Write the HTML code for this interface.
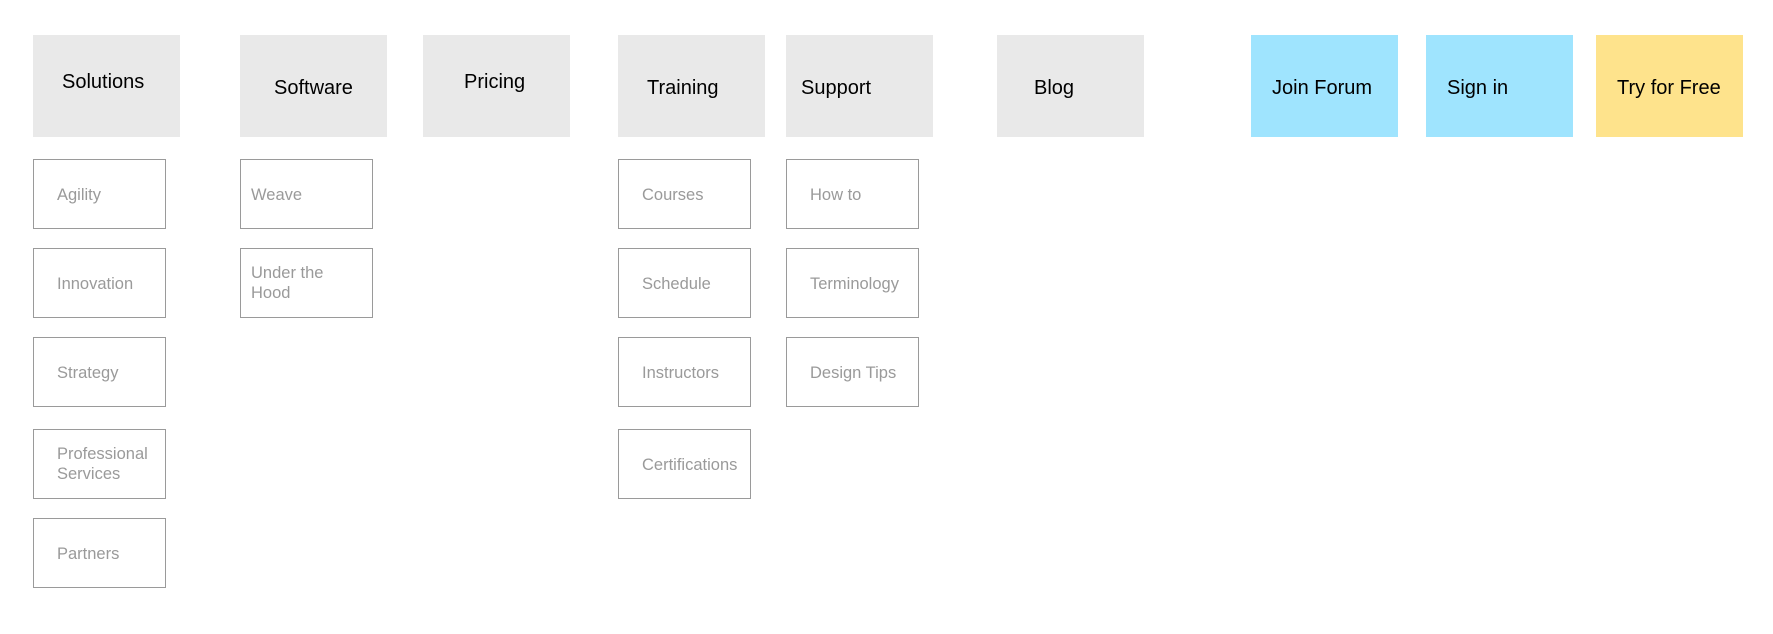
<!DOCTYPE html>
<html><head><meta charset="utf-8"><style>
body{margin:0;width:1773px;height:634px;background:#fff;position:relative;overflow:hidden;font-family:"Liberation Sans",Arial,sans-serif}
.t{position:absolute;top:35px;width:147px;height:102px;background:#e9e9e9;color:#000;font-size:20px}
.t span{position:absolute;line-height:24px}
.s{position:absolute;width:131px;height:68px;border:1px solid #9a9a9a;color:#9a9a9a;font-size:16.5px;display:flex;align-items:center;line-height:20px;box-sizing:content-box}
.s span{margin-top:2px}
</style></head><body>
<div class="t" style="left:33px"><span style="left:29px;top:35px">Solutions</span></div>
<div class="t" style="left:240px"><span style="left:34px;top:41px">Software</span></div>
<div class="t" style="left:423px"><span style="left:41px;top:35px">Pricing</span></div>
<div class="t" style="left:618px"><span style="left:29px;top:41px">Training</span></div>
<div class="t" style="left:786px"><span style="left:15px;top:41px">Support</span></div>
<div class="t" style="left:997px"><span style="left:37px;top:41px">Blog</span></div>
<div class="t" style="left:1251px;background:#9fe4fe"><span style="left:21px;top:41px">Join Forum</span></div>
<div class="t" style="left:1426px;background:#9fe4fe"><span style="left:21px;top:41px">Sign in</span></div>
<div class="t" style="left:1596px;background:#fee38c"><span style="left:21px;top:41px">Try for Free</span></div>

<div class="s" style="left:33px;top:159px"><span style="padding-left:23px">Agility</span></div>
<div class="s" style="left:33px;top:248px"><span style="padding-left:23px">Innovation</span></div>
<div class="s" style="left:33px;top:337px"><span style="padding-left:23px">Strategy</span></div>
<div class="s" style="left:33px;top:429px"><span style="padding-left:23px;margin-top:-1px">Professional<br>Services</span></div>
<div class="s" style="left:33px;top:518px"><span style="padding-left:23px">Partners</span></div>

<div class="s" style="left:240px;top:159px"><span style="padding-left:10px">Weave</span></div>
<div class="s" style="left:240px;top:248px"><span style="padding-left:10px;margin-top:-1px">Under the<br>Hood</span></div>

<div class="s" style="left:618px;top:159px"><span style="padding-left:23px">Courses</span></div>
<div class="s" style="left:618px;top:248px"><span style="padding-left:23px">Schedule</span></div>
<div class="s" style="left:618px;top:337px"><span style="padding-left:23px">Instructors</span></div>
<div class="s" style="left:618px;top:429px"><span style="padding-left:23px">Certifications</span></div>

<div class="s" style="left:786px;top:159px"><span style="padding-left:23px">How to</span></div>
<div class="s" style="left:786px;top:248px"><span style="padding-left:23px">Terminology</span></div>
<div class="s" style="left:786px;top:337px"><span style="padding-left:23px">Design Tips</span></div>
</body></html>
